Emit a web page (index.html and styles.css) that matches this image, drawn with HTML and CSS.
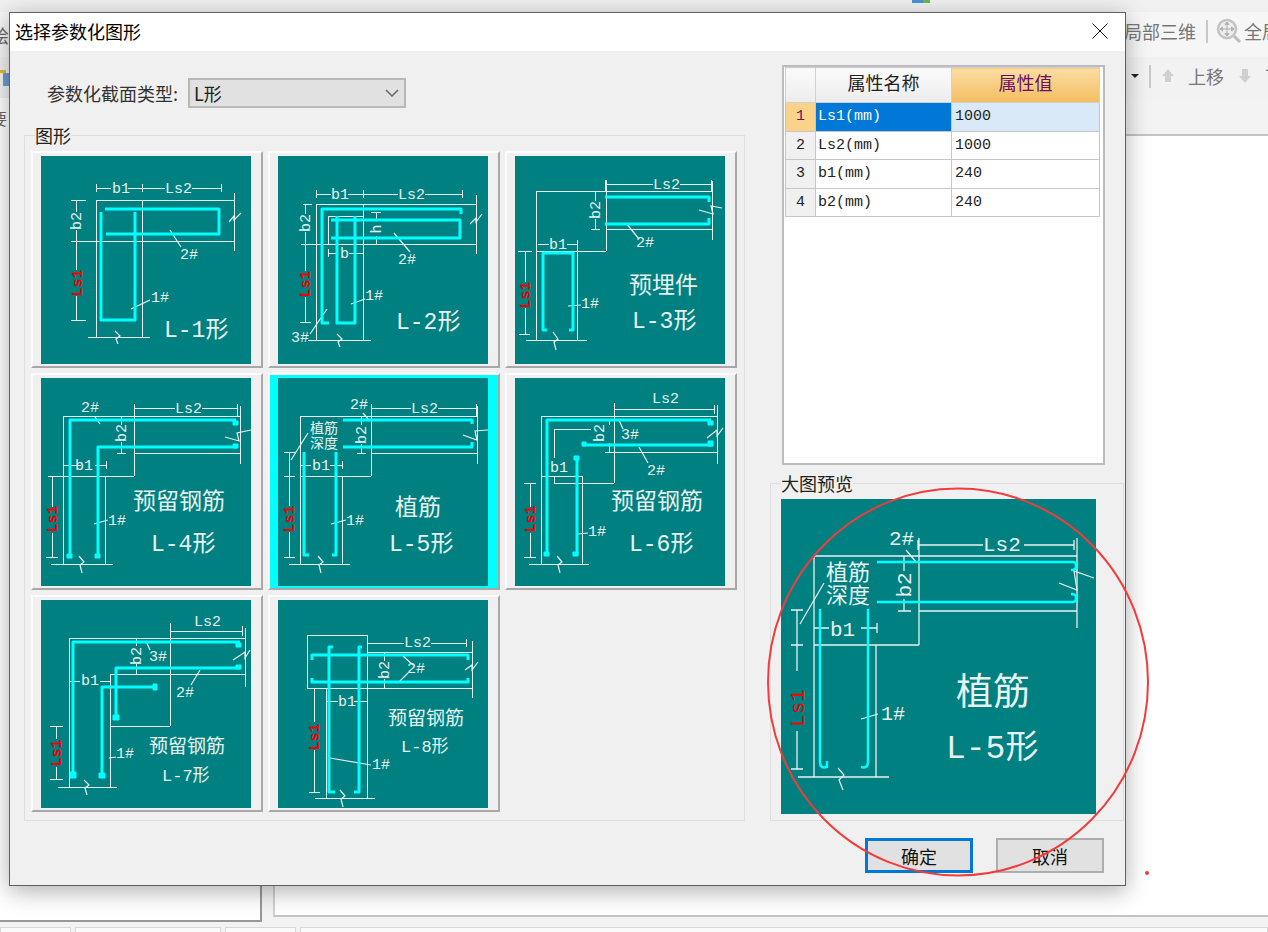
FILE: index.html
```html
<!DOCTYPE html>
<html lang="zh-CN">
<head>
<meta charset="utf-8">
<title>选择参数化图形</title>
<link rel="stylesheet" href="styles.css">
</head>
<body>
<div class="app">
  <div class="menubar"><span class="menu-icon"></span></div>
  <div class="toolbar tb-main">
    <div class="tool-left"><span class="clip-char">绘</span></div>
    <div class="tool-right tr-main">
      <span>局部三维</span>
      <i class="tool-sep"></i>
      <svg class="zoom-ico" width="26" height="26" viewBox="0 0 26 26"><circle class="zi-ring" cx="11" cy="11" r="9"/><path class="zi-cross" d="M11 5V17M5 11H17M11 4L9 6.500H13ZM11 18L9 15.500H13ZM4 11L6.500 9V13ZM18 11L15.500 9V13Z"/><path class="zi-handle" d="M18 18L24 24"/></svg>
      <span>全局</span>
    </div>
  </div>
  <div class="toolbar tb-sub">
    <div class="tool-left"><span class="side-icon"><i class="side-star"></i><i class="side-doc"></i></span></div>
    <div class="tool-right tr-sub">
      <i class="caret"></i>
      <i class="tool-sep"></i>
      <svg class="arrow-ico arrow-up" width="14" height="16" viewBox="0 0 14 16"><path d="M7 1L13 8H10V14H4V8H1Z"/></svg>
      <span class="sub-label">上移</span>
      <svg class="arrow-ico arrow-down" width="14" height="16" viewBox="0 0 14 16"><path d="M4 1H10V8H13L7 15L1 8H4Z"/></svg>
      <span>下移</span>
    </div>
  </div>
  <div class="workspace">
    <div class="panel-left"><span class="clip-char lower">要</span></div>
    <div class="panel-right"></div>
  </div>
  <div class="statusbar"><i class="st-a"></i><i class="st-b"></i><i class="st-c"></i><i class="st-d"></i></div>
</div>

<section class="dialog">
  <header class="dialog-title">
    <span>选择参数化图形</span>
    <svg class="close-x" width="16" height="16" viewBox="0 0 16 16"><path d="M0.500 0.500L15.500 15.500M15.500 0.500L0.500 15.500"/></svg>
  </header>
  <div class="dialog-body">
    <div class="col-left">
      <div class="type-row">
        <span class="type-label">参数化截面类型:</span>
        <div class="select"><span class="select-val">L形</span>
          <svg width="14" height="8" viewBox="0 0 14 8"><path d="M1 1L7 7L13 1"/></svg>
        </div>
      </div>
      <fieldset class="group group-shapes">
        <legend>图形</legend>
        <div class="tiles">

          <div class="tile"><svg class="fig" viewBox="0 0 210 208">
            <path class="dim" d="M55 32H70M87 32H124M151 32H180M55 28V36M101 28V36M180 28V36M55 44H193M32 85H193M55 44V181M101 44V181M193 37V95M47 181H109M30 44H45M35 44V56M35 74V114M35 140V164M30 164H45M30 85H40"/>
            <path class="thin" d="M74 175L79 180L75 183L77 188M188 66L193 60L193 64L200 57M129 74L140 91M90 153L109 144"/>
            <path class="bar" d="M64 53H178V78H65M94 56V164H60V56"/>
            <text class="t" x="71" y="37">b1</text><text class="t" x="124" y="37">Ls2</text>
            <text class="t mid" transform="translate(40 65) rotate(-90)">b2</text>
            <text class="t red mid" transform="translate(41 127) rotate(-90)">Ls1</text>
            <text class="t" x="139" y="103">2#</text><text class="t" x="110" y="146">1#</text>
            <text class="lbl" x="123" y="181">L-1形</text>
          </svg></div>

          <div class="tile"><svg class="fig" viewBox="0 0 210 208">
            <path class="dim" d="M38 38H53M70 38H120M147 38H184M38 34V42M85 34V42M184 34V42M38 48H198M23 88H198M38 48V184M85 48V184M198 39V98M30 184H93M50 60H85M50 60V88M98 56V64M98 80V88M93 56H103M25 48H34M27 48V58M27 76V115M27 141V166M22 166H33M23 88H32M50 97H59M71 97H85M50 93V101M85 93V101"/>
            <path class="thin" d="M59 178L64 183L60 186L62 191M192 68L198 62L198 66L204 58M116 77L132 96M73 148L87 143M49 153L32 178"/>
            <path class="bar" d="M183 58V53H44V167H51M53 64H182V82H53M77 60V167H59V60"/>
            <text class="t" x="53" y="43">b1</text><text class="t" x="120" y="43">Ls2</text>
            <text class="t" x="62" y="102">b</text>
            <text class="t mid" transform="translate(32 67) rotate(-90)">b2</text>
            <text class="t mid" transform="translate(103 73) rotate(-90)">h</text>
            <text class="t red mid" transform="translate(32 128) rotate(-90)">Ls1</text>
            <text class="t" x="120" y="108">2#</text><text class="t" x="87" y="144">1#</text><text class="t" x="13" y="186">3#</text>
            <text class="lbl" x="118" y="173">L-2形</text>
          </svg></div>

          <div class="tile"><svg class="fig" viewBox="0 0 210 208">
            <path class="dim" d="M90 28H138M165 28H196M90 24V35M196 24V35M21 35H197M21 35V184M21 95H91M91 24V95M91 73H197M197 25V84M62 86V184M11 184H72M80 35V45M80 63V73M76 73H85M23 88H34M52 88H62M62 84V92M10 95V126M10 152V178M3 95H17M4 178H15"/>
            <path class="thin" d="M38 176L43 183L39 186L41 194M184 54L198 58L196 50L207 52M111 67L124 83M53 150L66 149"/>
            <path class="bar" d="M90 41H194V46M90 68H194V62M32 174H28V97H58V174H54"/>
            <text class="t" x="138" y="33">Ls2</text><text class="t" x="34" y="93">b1</text>
            <text class="t mid" transform="translate(85 54) rotate(-90)">b2</text>
            <text class="t red mid" transform="translate(15 139) rotate(-90)">Ls1</text>
            <text class="t" x="121" y="91">2#</text><text class="t" x="66" y="152">1#</text>
            <text class="lbl" x="114" y="137">预埋件</text>
            <text class="lbl" x="117" y="172">L-3形</text>
          </svg></div>

          <div class="tile"><svg class="fig" viewBox="0 0 210 208">
            <path class="dim" d="M93 30H134M161 30H196M93 26V38M196 26V38M22 38H199M22 38V186M7 98H93M93 30V98M93 75H199M199 28V86M64 98V186M10 186H72M40 87H22M65 87H54M65 83V91M80 38V47M80 64V75M76 75H85M11 98V129M11 155V179M5 179H17"/>
            <path class="thin" d="M38 178L43 184L39 187L41 195M184 59L198 63L196 55L210 52M54 39L59 46M53 146L67 142"/>
            <path class="bar" d="M29 177V42H195M57 177V69H196"/>
            <path class="bar blob" d="M192 43H197V47H192ZM192 66H197V70H192ZM26 176H31V180H26ZM54 176H59V180H54Z"/>
            <text class="t" x="134" y="35">Ls2</text><text class="t" x="40" y="34">2#</text><text class="t" x="34" y="92">b1</text>
            <text class="t mid" transform="translate(85 55) rotate(-90)">b2</text>
            <text class="t red mid" transform="translate(16 141) rotate(-90)">Ls1</text>
            <text class="t" x="67" y="147">1#</text>
            <text class="lbl" x="92" y="131">预留钢筋</text>
            <text class="lbl" x="110" y="173">L-4形</text>
          </svg></div>

          <div class="tile tile-on"><svg class="fig" viewBox="0 0 210 208">
            <path class="dim" d="M93 30H133M160 30H198M93 26V38M198 26V38M22 38H199M22 38V186M22 98H93M93 30V98M93 75H199M199 28V86M64 98V186M11 186H72M22 87H33M52 87H64M64 83V91M83 38V47M83 66V75M79 75H88M11 74V128M11 154V179M6 74H17M6 98H17M6 179H17"/>
            <path class="thin" d="M40 178L45 184L41 187L43 195M185 57L199 62L197 53L210 52M85 35L91 42M53 146L68 142M30 55L13 82"/>
            <path class="bar" d="M65 42H194V46M65 69H194V64M26 74V177H31M58 74V177H54"/>
            <text class="t" x="133" y="35">Ls2</text><text class="t" x="72" y="31">2#</text><text class="t" x="34" y="92">b1</text>
            <text class="t sm" x="32" y="55">植筋</text><text class="t sm" x="32" y="70">深度</text>
            <text class="t mid" transform="translate(88 57) rotate(-90)">b2</text>
            <text class="t red mid" transform="translate(16 141) rotate(-90)">Ls1</text>
            <text class="t" x="68" y="147">1#</text>
            <text class="lbl" x="117" y="137">植筋</text>
            <text class="lbl" x="111" y="173">L-5形</text>
          </svg></div>

          <div class="tile"><svg class="fig" viewBox="0 0 210 208">
            <path class="dim" d="M99 31H199M99 25V38M199 27V36M26 38H202M26 38V186M26 98H67M67 98V186M39 51H76M39 51V80M39 98V105M39 105H99M99 25V105M90 74H202M202 27V86M14 186H74M94 42V47M94 65V74M88 42H98M9 105H21M15 105V129M15 155V179M9 179H21"/>
            <path class="thin" d="M42 178L47 184L43 187L45 195M192 60L202 52L202 58L208 50M104 42L108 51M124 69L133 85M63 156L73 155"/>
            <path class="bar" d="M32 177V42H196M68 67H198M62 79V177"/>
            <path class="bar blob" d="M193 43H198V47H193ZM193 63H198V68H193ZM67 64H71V68H67ZM59 78H64V82H59ZM29 174H34V178H29ZM58 174H63V178H58Z"/>
            <text class="t" x="137" y="25">Ls2</text><text class="t" x="35" y="94">b1</text>
            <text class="t mid" transform="translate(89 55) rotate(-90)">b2</text>
            <text class="t" x="106" y="61">3#</text><text class="t" x="132" y="97">2#</text>
            <text class="t red mid" transform="translate(20 141) rotate(-90)">Ls1</text>
            <text class="t" x="73" y="158">1#</text>
            <text class="lbl" x="96" y="131">预留钢筋</text>
            <text class="lbl" x="114" y="173">L-6形</text>
          </svg></div>

          <div class="tile"><svg class="fig" viewBox="0 0 210 208">
            <path class="dim" d="M129 31H201M129 23V126M201 26V36M28 38H204M28 38V187M204 28V87M69 74H204M69 74V187M69 126H129M17 187H76M95 38V46M95 64V74M28 81H39M59 81H69M69 77V85M9 126H22M15 126V139M15 167V179M9 179H22"/>
            <path class="thin" d="M43 180L48 185L44 188L46 195M192 60L204 52L204 58L209 50M105 41L109 50M159 70L150 85M68 158L75 157"/>
            <path class="bar" d="M32 175V42H199M75 118V68H199M61 176V87H115"/>
            <path class="bar blob" d="M195 43H200V47H195ZM195 65H200V69H195ZM29 172H35V178H29ZM58 173H64V178H58ZM72 115H78V120H72ZM112 84H116V90H112Z"/>
            <text class="t" x="153" y="26">Ls2</text><text class="t" x="40" y="85">b1</text>
            <text class="t mid" transform="translate(100 56) rotate(-90)">b2</text>
            <text class="t" x="108" y="61">3#</text><text class="t" x="135" y="97">2#</text>
            <text class="t red mid" transform="translate(20 153) rotate(-90)">Ls1</text>
            <text class="t" x="75" y="158">1#</text>
            <text class="lbl lbl-s" x="108" y="153">预留钢筋</text>
            <text class="lbl lbl-t" x="121" y="181">L-7形</text>
          </svg></div>

          <div class="tile"><svg class="fig" viewBox="0 0 210 208">
            <path class="dim" d="M29 35H89V88H29ZM89 43H126M153 43H188M188 39V47M89 52H195M89 88H195M194 41V98M48 88V198M89 88V198M37 198H97M106 52V61M106 79V88M48 101H60M76 101H89M36 88V122M36 150V192M31 192H42"/>
            <path class="thin" d="M62 190L67 196L63 199L65 207M187 70L194 65L194 70L200 62M125 56L135 65M130 73L121 82M52 158L93 165"/>
            <path class="bar" d="M34 60V55H190V60M34 78V82H190V78M55 47H51V192H57M84 47H81V192H76"/>
            <text class="t" x="126" y="47">Ls2</text><text class="t" x="60" y="106">b1</text>
            <text class="t mid" transform="translate(111 70) rotate(-90)">b2</text>
            <text class="t" x="129" y="73">2#</text>
            <text class="t red mid" transform="translate(41 137) rotate(-90)">Ls1</text>
            <text class="t" x="94" y="169">1#</text>
            <text class="lbl lbl-s" x="110" y="125">预留钢筋</text>
            <text class="lbl lbl-t" x="123" y="152">L-8形</text>
          </svg></div>

        </div>
      </fieldset>
    </div>

    <div class="col-right">
      <div class="prop-grid">
        <table class="props">
          <thead><tr><th class="rh"></th><th>属性名称</th><th class="h-active">属性值</th></tr></thead>
          <tbody>
            <tr><td class="rh rh-active">1</td><td class="sel">Ls1(mm)</td><td class="sel-val">1000</td></tr>
            <tr><td class="rh">2</td><td>Ls2(mm)</td><td class="val">1000</td></tr>
            <tr><td class="rh">3</td><td>b1(mm)</td><td class="val">240</td></tr>
            <tr><td class="rh">4</td><td>b2(mm)</td><td class="val">240</td></tr>
          </tbody>
        </table>
      </div>
      <fieldset class="group group-preview">
        <legend>大图预览</legend>
        <svg class="preview" viewBox="0 0 315 315">
          <path class="dim" d="M137 46H202M243 46H293M137 41V51M293 41V51M33 57H296M33 57V278M33 146H138M138 39V146M138 112H296M296 39V129M95 146V278M17 278H108M123 57V72M123 100V112M117 112H130M33 129H48M80 129H96M96 124V134M16 111V172M16 232V270M10 111H22M10 146H22M10 270H22"/>
          <path class="thin" d="M57 269L63 276L58 281L62 291M278 84L296 91L293 72L313 79M125 51L135 63M80 220L97 215M43 84L19 125"/>
          <path class="bar bar-p" d="M96 63H292Q295 63 295 66V68Q295 71 290 71M96 103H292Q295 103 295 100V98Q295 95 290 95M39 110V263Q39 270 46 268V262M87 110V263Q87 270 80 268"/>
          <text class="t p-t" x="202" y="52">Ls2</text><text class="t p-t" x="108" y="46">2#</text><text class="t p-t" x="49" y="137">b1</text>
          <text class="t p-s" x="45" y="81">植筋</text><text class="t p-s" x="45" y="104">深度</text>
          <text class="t p-t mid" transform="translate(130 86) rotate(-90)">b2</text>
          <text class="t p-t red mid" transform="translate(23 209) rotate(-90)">Ls1</text>
          <text class="t p-n" x="100" y="221">1#</text>
          <text class="lbl p-a" x="175" y="206">植筋</text>
          <text class="lbl p-b" x="165" y="259">L-5形</text>
        </svg>
      </fieldset>
      <div class="actions">
        <button class="btn btn-primary" type="button">确定</button>
        <button class="btn" type="button">取消</button>
      </div>
    </div>
  </div>
</section>

<svg class="annotation" width="1268" height="932" viewBox="0 0 1268 932">
  <ellipse cx="958" cy="682" rx="190" ry="193.500"/>
  <circle class="dot" cx="1147" cy="873" r="2"/>
</svg>
</body>
</html>
```

FILE: styles.css
```css
html, body {
  margin: 0;
  padding: 0;
}
body {
  width: 1268px;
  height: 932px;
  overflow: hidden;
  position: relative;
  background: #f3f3f3;
  font-family: "Noto Sans CJK SC", "Liberation Sans", sans-serif;
  color: #222;
}

/* application behind the dialog */
.app {
  height: 932px;
  display: flex;
  flex-direction: column;
  background: #f3f3f3;
}
.menubar {
  height: 12px;
  background: #f0f0f0;
  position: relative;
}
.menu-icon {
  position: absolute;
  left: 912px;
  top: 0;
  width: 18px;
  height: 3px;
  background: linear-gradient(90deg, #4a90d9 60%, #6fb54a 60%);
}
.toolbar {
  display: flex;
  align-items: center;
  justify-content: space-between;
  overflow: hidden;
  color: #777;
  font-size: 18px;
}
.tb-main {
  height: 45px;
  background: #f6f6f6;
}
.tb-sub {
  height: 41px;
  background: #f2f2f2;
}
.tool-left {
  flex: 1;
  overflow: hidden;
}
.clip-char {
  display: block;
  width: 18px;
  margin-left: -9px;
  line-height: 24px;
  color: #666;
}
.side-icon {
  display: flex;
  flex-direction: column;
  align-items: flex-start;
  margin-top: -6px;
}
.side-star {
  display: block;
  width: 6px;
  height: 9px;
  background: #e8b92e;
}
.side-doc {
  display: block;
  width: 6px;
  height: 13px;
  margin-left: 3px;
  background: #6d9bd1;
}
.tool-right {
  display: flex;
  align-items: center;
  flex: none;
  white-space: nowrap;
  overflow: hidden;
}
.tr-main {
  width: 144px;
  gap: 10px;
  margin-top: -7px;
}
.tr-sub {
  width: 137px;
  gap: 10px;
  margin-top: -3px;
}
.tool-sep {
  flex: none;
  width: 2px;
  height: 23px;
  background: #c8c8c8;
}
.zoom-ico {
  flex: none;
  margin: 0 -8px 0 -2px;
}
.zi-ring {
  fill: #eee;
  stroke: #c4c4c4;
  stroke-width: 2.500;
}
.zi-cross {
  stroke: #b0b0b0;
  fill: #b0b0b0;
  stroke-width: 1;
}
.zi-handle {
  stroke: #bdbdbd;
  stroke-width: 3;
}
.caret {
  flex: none;
  width: 0;
  height: 0;
  border-left: 4px solid transparent;
  border-right: 4px solid transparent;
  border-top: 4px solid #222;
}
.arrow-ico {
  flex: none;
  fill: #d0d0d0;
}
.arrow-up {
  margin-right: 3px;
}
.arrow-down {
  margin-right: 3px;
}
.sub-label {
  margin-right: 4px;
}
.workspace {
  height: 824px;
  display: flex;
  gap: 11px;
}
.panel-left {
  width: 260px;
  height: 822px;
  background: #fff;
  border-right: 2px solid #95999c;
  border-bottom: 2px solid #95999c;
}
.lower {
  margin-top: 8px;
}
.panel-right {
  flex: 1;
  height: 779px;
  margin-top: 36px;
  background: #fff;
  border-top: 2px solid #c4c4c8;
  border-left: 2px solid #d0d0d4;
  border-bottom: 2px solid #c4c4c8;
}
.statusbar {
  display: flex;
  gap: 4px;
  margin-top: 5px;
  height: 5px;
  flex: none;
}
.statusbar i {
  display: block;
  height: 5px;
  border: 1px solid #d8d8d8;
  border-bottom: 0;
  box-sizing: border-box;
  background: #fafafa;
}
.st-a { width: 71px; }
.st-b { width: 146px; }
.st-c { width: 71px; }
.st-d { flex: 1; }

/* dialog window */
.dialog {
  position: absolute;
  left: 9px;
  top: 12px;
  width: 1117px;
  height: 874px;
  box-sizing: border-box;
  border: 1px solid #5f5f5f;
  background: #f0f0f0;
  box-shadow: 0 5px 22px rgba(0, 0, 0, 0.32);
  display: flex;
  flex-direction: column;
}
.dialog-title {
  flex: none;
  box-sizing: border-box;
  height: 38px;
  background: #fff;
  display: flex;
  align-items: center;
  justify-content: space-between;
  padding: 0 17px 2px 5px;
  font-size: 18px;
  color: #000;
}
.close-x {
  fill: none;
  stroke: #111;
  stroke-width: 1;
}
.dialog-body {
  flex: 1;
  display: flex;
  gap: 25px;
  padding-left: 14px;
}
.col-left {
  width: 721px;
  display: flex;
  flex-direction: column;
}
.type-row {
  display: flex;
  align-items: center;
  gap: 10px;
  height: 30px;
  margin: 27px 0 17px 23px;
  font-size: 18px;
  color: #333;
}
.type-label {
  white-space: nowrap;
  line-height: 30px;
}
.select {
  box-sizing: border-box;
  width: 218px;
  height: 30px;
  border: 2px solid #b8b8b8;
  background: #e1e1e1;
  display: flex;
  align-items: center;
  justify-content: space-between;
  padding: 0 5px 0 4px;
  color: #222;
}
.select svg {
  fill: none;
  stroke: #666;
  stroke-width: 1.500;
}
.group {
  margin: 0;
  padding: 0;
  border: 1px solid #dedede;
  min-width: 0;
  box-sizing: border-box;
}
.group legend {
  padding: 0;
  font-size: 18px;
  line-height: 20px;
  color: #222;
}
.group-shapes {
  height: 696px;
  padding: 6px 6px 0;
}
.group-shapes legend {
  margin-left: 4px;
}
.tiles {
  display: grid;
  grid-template-columns: repeat(3, 232px);
  grid-auto-rows: 217px;
  gap: 5px;
}
.tile {
  box-sizing: border-box;
  padding: 3px 10px 2px 8px;
  background: #f0f0f0;
  border: 2px solid;
  border-color: #fcfcfc #a8a8a8 #a8a8a8 #fcfcfc;
}
.tile-on {
  background: #00ffff;
}
.fig {
  display: block;
  width: 210px;
  height: 208px;
  background: #008080;
}

/* diagram strokes and labels */
.dim {
  fill: none;
  stroke: #e6f2f0;
  stroke-width: 1;
  shape-rendering: crispEdges;
}
.thin {
  fill: none;
  stroke: #e6f2f0;
  stroke-width: 1.200;
}
.bar {
  fill: none;
  stroke: #00ffff;
  stroke-width: 3;
  stroke-linejoin: round;
}
.blob {
  fill: #00ffff;
  stroke-width: 1;
}
.bar-p {
  stroke-width: 2.500;
}
.preview .dim {
  stroke-width: 1.300;
  shape-rendering: auto;
}
.t {
  font-family: "Liberation Mono", "Noto Sans CJK SC", monospace;
  font-size: 15px;
  fill: #e6f2f0;
}
.sm {
  font-size: 14px;
}
.mid {
  text-anchor: middle;
}
.red {
  fill: #f00000;
  font-weight: 700;
}
.lbl {
  font-family: "Liberation Mono", "Noto Sans CJK SC", monospace;
  font-size: 23px;
  fill: #e6f2f0;
}
.lbl-s {
  font-size: 19px;
}
.lbl-t {
  font-size: 17px;
}
.p-t {
  font-size: 21px;
  font-weight: 400;
}
.p-s {
  font-size: 22px;
}
.p-n {
  font-size: 20px;
}
.p-a {
  font-size: 37px;
}
.p-b {
  font-size: 33px;
}

/* right column */
.col-right {
  width: 354px;
  display: flex;
  flex-direction: column;
}
.prop-grid {
  box-sizing: border-box;
  width: 323px;
  height: 400px;
  margin: 14px 0 8px 12px;
  padding: 0 4px 0 1px;
  background: #fff;
  border: 2px solid #bcbcc0;
}
.props {
  border-collapse: collapse;
  table-layout: fixed;
  width: 315px;
  font-family: "Liberation Mono", "Noto Sans CJK SC", monospace;
  font-size: 15px;
}
.props th {
  height: 35px;
  padding: 0 0 6px;
  box-sizing: border-box;
  font-family: "Noto Sans CJK SC", sans-serif;
  font-size: 18px;
  font-weight: 400;
  color: #222;
  background: linear-gradient(#fbfbfb, #ececec);
  border: 1px solid #d0d0d0;
}
.props th:first-child {
  width: 30px;
}
.props th:nth-child(2) {
  width: 136px;
}
.props .h-active {
  color: #6a0f62;
  background: linear-gradient(#fbdda4, #f3bd60);
}
.props td {
  height: 28.500px;
  padding: 0 0 0 2px;
  box-sizing: border-box;
  border: 1px solid #c6c6c6;
  color: #222;
}
.props td.val,
.props td.sel-val {
  padding-left: 3px;
}
.props td.rh {
  padding: 0;
  text-align: center;
  background: #f0f0f0;
}
.props td.rh-active {
  background: #fbd28a;
  color: #6a0f62;
}
.props td.sel {
  background: #0078d7;
  color: #fff;
}
.props td.sel-val {
  background: #d9e9f8;
}
.group-preview {
  height: 348px;
  padding: 6px 0 0 10px;
}
.group-preview legend {
  margin-left: 0;
}
.preview {
  display: block;
  width: 315px;
  height: 315px;
  background: #008080;
}
.actions {
  display: flex;
  justify-content: flex-end;
  gap: 23px;
  margin: 17px 20px 0 0;
}
.btn {
  width: 108px;
  height: 35px;
  padding: 0;
  border: 2px solid #adadad;
  background: #e1e1e1;
  font-family: inherit;
  font-size: 18px;
  color: #111;
}
.btn-primary {
  border: 3px solid #0078d7;
}

/* hand-drawn mark over the window */
.annotation {
  position: absolute;
  left: 0;
  top: 0;
  fill: none;
  stroke: #f23c3c;
  stroke-width: 2;
  pointer-events: none;
}
.dot {
  fill: #f23c3c;
  stroke: none;
}
```
